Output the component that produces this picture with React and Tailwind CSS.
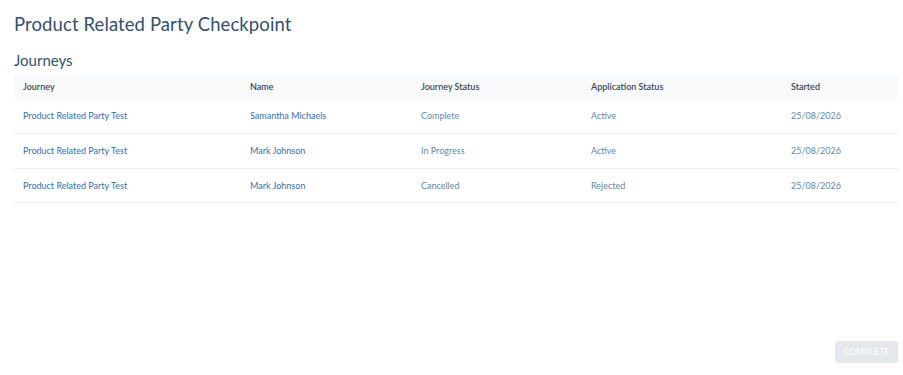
import React from "react";

const rows = [
  { journey: "Product Related Party Test", name: "Samantha Michaels", status: "Complete", app: "Active", started: "25/08/2026" },
  { journey: "Product Related Party Test", name: "Mark Johnson", status: "In Progress", app: "Active", started: "25/08/2026" },
  { journey: "Product Related Party Test", name: "Mark Johnson", status: "Cancelled", app: "Rejected", started: "25/08/2026" },
];

const App = () => {
  return (
    <div className="w-[903px] h-[375px] bg-white flex flex-col pl-[14px] pr-[5px] font-['Lato','Liberation_Sans',sans-serif]">
      <h1 className="mt-[11px] text-[18.5px] leading-[26px] text-[#34506f] tracking-[0.1px]">
        Product Related Party Checkpoint
      </h1>
      <h2 className="mt-[13px] text-[15px] leading-[20px] text-[#34506f]">Journeys</h2>

      <table className="mt-[5px] w-full table-fixed border-collapse text-[9px]">
        <colgroup>
          <col className="w-[227px]" />
          <col className="w-[171px]" />
          <col className="w-[170px]" />
          <col className="w-[200px]" />
          <col />
        </colgroup>
        <thead>
          <tr className="bg-[#f8f9fb] h-[24px] text-left text-[#3d4857]">
            <th className="pl-[9px] font-semibold">Journey</th>
            <th className="pl-[9px] font-semibold">Name</th>
            <th className="pl-[9px] font-semibold">Journey Status</th>
            <th className="pl-[9px] font-semibold">Application Status</th>
            <th className="pl-[9px] font-semibold">Started</th>
          </tr>
        </thead>
        <tbody>
          {rows.map((r, i) => (
            <tr key={i} className="h-[34.5px] border-b border-[#eceef1]">
              <td className="pl-[9px] text-[#2f70b8]">{r.journey}</td>
              <td className="pl-[9px] text-[#2f70b8]">{r.name}</td>
              <td className="pl-[9px] text-[#6287b0]">{r.status}</td>
              <td className="pl-[9px] text-[#6287b0]">{r.app}</td>
              <td className="pl-[9px] text-[#6287b0]">{r.started}</td>
            </tr>
          ))}
        </tbody>
      </table>

      <div className="flex-1" />
      <div className="flex justify-end mb-[12px]">
        <button className="w-[63px] h-[22px] rounded-[3px] bg-[#e4e7eb] text-white text-[8.5px] tracking-[0.2px]">
          COMPLETE
        </button>
      </div>
    </div>
  );
};

export default App;
